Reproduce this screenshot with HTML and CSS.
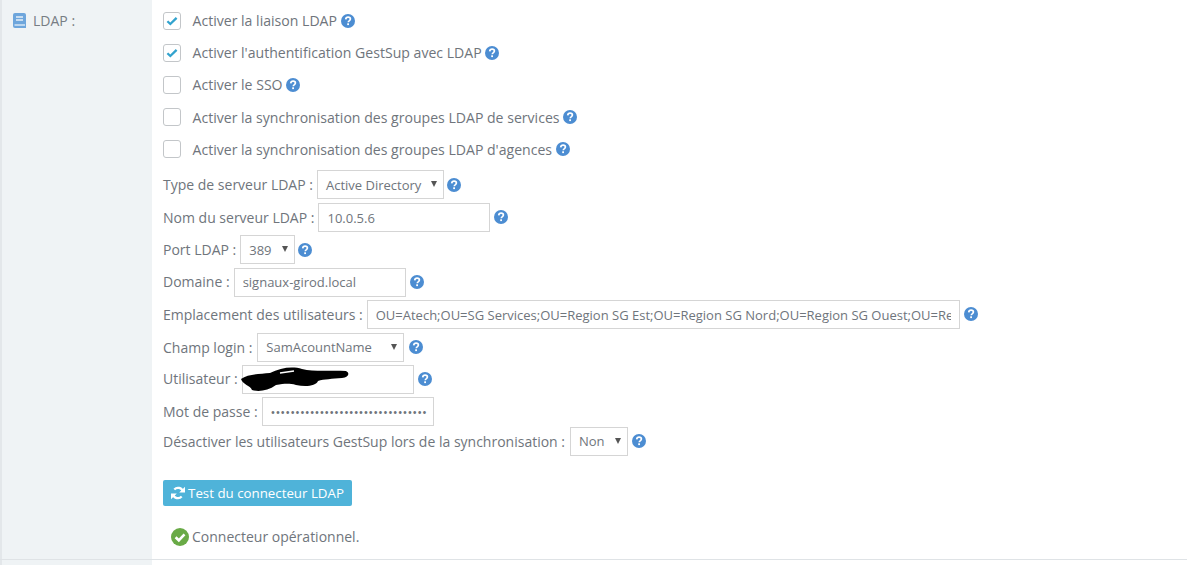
FILE: index.html
```html
<!DOCTYPE html>
<html lang="fr">
<head>
<meta charset="utf-8">
<title>LDAP</title>
<link rel="stylesheet" href="styles.css">
</head>
<body>
<svg class="defs" width="0" height="0" aria-hidden="true">
  <symbol id="help" viewBox="0 0 14 14">
    <circle cx="7" cy="7" r="7" fill="currentColor"/>
    <path d="M4.7 5.3C4.9 3.9 5.8 3.2 7.1 3.2c1.400 0 2.300.8 2.300 1.900 0 1-.6 1.400-1.200 1.800-.6.4-.9.7-.9 1.300" fill="none" stroke="#fff" stroke-width="1.700"/>
    <rect x="6.200" y="9.300" width="1.800" height="1.800" fill="#fff"/>
  </symbol>
  <symbol id="tick" viewBox="0 0 14 12">
    <path d="M1.500 6.300 5 9.600 12.500 2.200" fill="none" stroke="currentColor" stroke-width="2.800"/>
  </symbol>
</svg>
<main class="row">
  <aside class="side">
    <svg class="book" viewBox="0 0 13 15" aria-hidden="true">
      <path d="M2 0h9a2 2 0 0 1 2 2v13H2a2 2 0 0 1-2-2V2a2 2 0 0 1 2-2z" fill="#6ea6dc"/>
      <path d="M3 4h7M3 7h7" stroke="#e6f0f8" stroke-width="1.300"/>
      <path d="M1.500 12h10.500" stroke="#e6f0f8" stroke-width="1.300"/>
    </svg>
    <span>LDAP :</span>
  </aside>
  <section class="content">
    <div class="checks">
      <label class="check"><span class="box"><svg class="tick"><use href="#tick"/></svg></span>Activer la liaison LDAP <svg class="help"><use href="#help"/></svg></label>
      <label class="check"><span class="box"><svg class="tick"><use href="#tick"/></svg></span>Activer l'authentification GestSup avec LDAP <svg class="help"><use href="#help"/></svg></label>
      <label class="check"><span class="box"></span>Activer le SSO <svg class="help"><use href="#help"/></svg></label>
      <label class="check"><span class="box"></span>Activer la synchronisation des groupes LDAP de services <svg class="help"><use href="#help"/></svg></label>
      <label class="check"><span class="box"></span>Activer la synchronisation des groupes LDAP d'agences <svg class="help"><use href="#help"/></svg></label>
    </div>
    <div class="fields">
      <div class="field"><span>Type de serveur LDAP :</span><span class="select w-ad">Active Directory</span><svg class="help"><use href="#help"/></svg></div>
      <div class="field"><span>Nom du serveur LDAP :</span><input class="input" type="text" value="10.0.5.6"><svg class="help"><use href="#help"/></svg></div>
      <div class="field field-low"><span>Port LDAP :</span><span class="select w-port">389</span><svg class="help"><use href="#help"/></svg></div>
      <div class="field"><span>Domaine :</span><input class="input" type="text" value="signaux-girod.local"><svg class="help"><use href="#help"/></svg></div>
      <div class="field"><span>Emplacement des utilisateurs :</span><input class="input w-long" type="text" value="OU=Atech;OU=SG Services;OU=Region SG Est;OU=Region SG Nord;OU=Region SG Ouest;OU=Region SG Sud"><svg class="help"><use href="#help"/></svg></div>
      <div class="field field-low"><span>Champ login :</span><span class="select w-login">SamAcountName</span><svg class="help"><use href="#help"/></svg></div>
      <div class="field"><span>Utilisateur :</span>
        <span class="masked">
          <input class="input" type="text" value="">
          <svg class="scribble" viewBox="0 0 110 26" aria-hidden="true">
            <path d="M1 13C8 8 20 8 30 7 40 2 52 0 62 3 74 6 92 4 106 5 110 7 109 11 102 12 92 13 84 13 78 15 76 20 66 21 56 19 48 17 44 18 36 19 28 25 18 26 12 24 10 19 3 19 1 13Z" fill="#000"/>
            <path d="M40 7 54 5" stroke="#fff" stroke-width="1.500"/>
          </svg>
        </span><svg class="help"><use href="#help"/></svg></div>
      <div class="field"><span>Mot de passe :</span><input class="input input-pass" type="password" value="passwordpasswordpasswordpassword"></div>
      <div class="field field-last"><span>Désactiver les utilisateurs GestSup lors de la synchronisation :</span><span class="select w-non">Non</span><svg class="help"><use href="#help"/></svg></div>
    </div>
    <button class="btn" type="button">
      <svg class="refresh" viewBox="0 0 14 14" aria-hidden="true">
        <path d="M12 5.400A5.200 5.200 0 0 0 3.300 3.400" fill="none" stroke="#fff" stroke-width="2.200"/>
        <path d="M14 .8V6.600H8.200z" fill="#fff"/>
        <path d="M2 8.600A5.200 5.200 0 0 0 10.700 10.600" fill="none" stroke="#fff" stroke-width="2.200"/>
        <path d="M0 13.200V7.400H5.800z" fill="#fff"/>
      </svg>Test du connecteur LDAP</button>
    <p class="status">
      <svg class="ok" viewBox="0 0 18 18" aria-hidden="true">
        <circle cx="9" cy="9" r="9" fill="#69aa46"/>
        <path d="M4.600 9.200 7.800 12.300 13.500 6.300" fill="none" stroke="#fff" stroke-width="2.600"/>
      </svg>Connecteur opérationnel.</p>
  </section>
</main>
<div class="next-row"><div class="next-side"></div></div>
</body>
</html>
```
FILE: styles.css
```css
* { box-sizing: border-box; }
html, body { margin: 0; padding: 0; }
body {
  width: 1187px;
  height: 565px;
  overflow: hidden;
  background: #fff;
  color: #6f757c;
  font-family: "Open Sans", "Liberation Sans", sans-serif;
  font-size: 14px;
}
.defs { position: absolute; }
.row {
  display: flex;
  height: 560px;
  border-bottom: 1px solid #dfe3e6;
}
.side {
  width: 152px;
  flex: none;
  padding: 12px 0 0 11px;
  display: flex;
  align-items: flex-start;
  gap: 7px;
  background: #eff3f5;
  border-left: 2px solid #e3e7ea;
  line-height: 18px;
  color: #777d84;
}
.next-row { height: 5px; }
.next-side {
  width: 152px;
  height: 5px;
  background: #eff3f5;
  border-left: 2px solid #e3e7ea;
}
.book { width: 13px; height: 15px; margin-top: 1px; }
.content {
  flex: 1;
  padding: 4.500px 0 0 11px;
  display: flex;
  flex-direction: column;
  align-items: flex-start;
}
.checks { display: flex; flex-direction: column; font-size: 14.080px; }
.check {
  height: 32.200px;
  display: flex;
  align-items: center;
  white-space: pre;
}
.box {
  width: 18px;
  height: 18px;
  margin-right: 11.500px;
  border: 1px solid #c3c6c9;
  border-radius: 3px;
  background: #fff;
  display: flex;
  align-items: center;
  justify-content: center;
}
.tick { width: 12px; height: 10px; color: #32a3ce; }
.help {
  width: 14px;
  height: 14px;
  flex: none;
  color: #4c8dd2;
}
.fields { display: flex; flex-direction: column; margin-top: 3px; }
.field {
  height: 32.400px;
  display: flex;
  align-items: center;
  gap: 4px;
  white-space: pre;
}
.field-low { padding-top: 1px; }
.input, .select {
  height: 29px;
  border: 1px solid #d5d5d5;
  background: #fff;
  color: #6f757c;
  font: inherit;
  font-size: 13px;
}
.input {
  width: 172px;
  padding: 0 8px;
  outline: none;
  margin-top: 1px;
}
.input-pass { padding-right: 6px; }
.w-long { width: 593px; }
.select {
  position: relative;
  display: flex;
  align-items: center;
  padding-left: 8px;
}
.select + .help { margin-left: -1px; }
.select::after {
  content: "";
  position: absolute;
  right: 6px;
  top: 10px;
  border-left: 3.500px solid transparent;
  border-right: 3.500px solid transparent;
  border-top: 6px solid #555;
}
.w-ad { width: 127px; }
.w-port { width: 55px; }
.w-login { width: 147px; margin-left: 1px; }
.w-login + .help { margin-left: 1px; }
.w-non { width: 58px; margin-left: 1px; }
.w-non + .help { margin-left: 0; }
.masked { position: relative; display: flex; }
.scribble {
  position: absolute;
  left: -2px;
  top: 2px;
  width: 110px;
  height: 26px;
}
.field-last { height: 29px; margin-top: -1px; }
.btn {
  margin-top: 24px;
  height: 26px;
  width: 189px;
  padding: 0;
  border: 0;
  border-radius: 2px;
  background: #4fb3d9;
  color: #fff;
  font: inherit;
  font-size: 13.300px;
  display: flex;
  align-items: center;
  justify-content: center;
  gap: 3px;
}
.refresh { width: 14px; height: 14px; }
.status {
  margin: 22px 0 0 8px;
  display: flex;
  align-items: center;
  gap: 3px;
  font-size: 14px;
  line-height: 18px;
}
.ok { width: 18px; height: 18px; }
```
